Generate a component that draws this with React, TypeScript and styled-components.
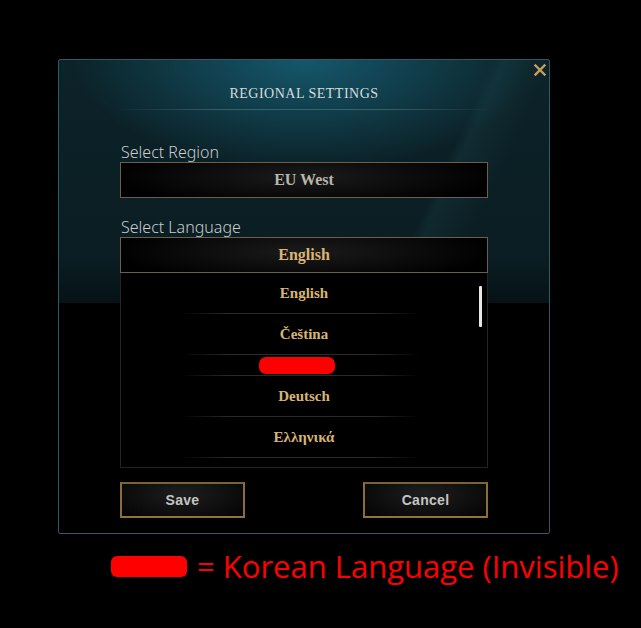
import { createGlobalStyle } from "styled-components"
import styled from "styled-components"

const GlobalStyle = createGlobalStyle`
  html, body {
    margin: 0;
    padding: 0;
    background: #000;
  }
  #root {
    width: 641px;
    height: 628px;
    background: #000;
  }
`

const Page = styled.div`
  padding: 59px 0 0 58px;
  width: 641px;
  height: 628px;
  box-sizing: border-box;
  background: #000;
`

const Dialog = styled.section`
  position: relative;
  width: 492px;
  height: 475px;
  box-sizing: border-box;
  border: 1px solid #2f5963;
  border-radius: 2px;
  background:
    radial-gradient(ellipse 230px 110px at 50% 0%, rgba(24, 105, 130, 0.75), rgba(12, 50, 62, 0) 100%),
    linear-gradient(115deg, rgba(0, 0, 0, 0) 72%, rgba(40, 90, 100, 0.18) 74%, rgba(0, 0, 0, 0) 82%),
    linear-gradient(to bottom, #0c2329 0px, #0a1d22 200px, #061216 242px),
    #000;
  background-size: 100% 100%, 100% 243px, 100% 243px, auto;
  background-repeat: no-repeat;
  display: flex;
  flex-direction: column;
  align-items: center;
`

const CloseButton = styled.button`
  position: absolute;
  top: 3px;
  right: 2px;
  width: 14px;
  height: 14px;
  padding: 0;
  border: 0;
  background: none;
  cursor: pointer;
`

const Title = styled.h1`
  margin: 25px 0 0;
  font-family: "Liberation Serif", "DejaVu Serif", serif;
  font-weight: 400;
  font-size: 14px;
  letter-spacing: 0.5px;
  color: #d6dcdc;
  line-height: 18px;
`

const Divider = styled.div`
  width: 380px;
  height: 1px;
  margin-top: 6px;
  background: linear-gradient(to right, rgba(60, 110, 120, 0), rgba(60, 110, 120, 0.8) 30%, rgba(60, 110, 120, 0.8) 70%, rgba(60, 110, 120, 0));
`

const Body = styled.div`
  width: 368px;
  margin-top: 32px;
  display: flex;
  flex-direction: column;
`

const Label = styled.div<{ $top?: number }>`
  margin-top: ${(p) => p.$top ?? 0}px;
  font-family: "Noto Sans", "Open Sans", sans-serif;
  font-weight: 300;
  font-size: 16px;
  line-height: 20px;
  color: #c9cccc;
  padding-left: 1px;
`

const Select = styled.div<{ $active?: boolean }>`
  height: 36px;
  box-sizing: border-box;
  border: 1px solid #6e6048;
  background: radial-gradient(ellipse 70% 120% at 50% 40%, #1b1b1b, #000 75%);
  display: flex;
  align-items: center;
  justify-content: center;
  font-family: "Liberation Serif", "DejaVu Serif", serif;
  font-weight: 700;
  font-size: 16px;
  color: ${(p) => (p.$active ? "#dcb574" : "#b9b6aa")};
`

const List = styled.ul`
  position: relative;
  margin: 0;
  padding: 0;
  list-style: none;
  height: 195px;
  box-sizing: border-box;
  border: 1px solid #262320;
  border-top: 0;
  background: #000;
  overflow: hidden;
`

const Item = styled.li<{ $short?: boolean }>`
  position: relative;
  height: ${(p) => (p.$short ? 21 : 41)}px;
  display: flex;
  align-items: center;
  justify-content: center;
  font-family: "Liberation Serif", "DejaVu Serif", serif;
  font-weight: 700;
  font-size: 15px;
  color: #d7b475;
  padding-bottom: 1px;
  box-sizing: border-box;

  &::after {
    content: "";
    position: absolute;
    left: 60px;
    right: 66px;
    bottom: 0;
    height: 1px;
    background: linear-gradient(to right, rgba(40, 40, 40, 0), #2a2a2a 20%, #2a2a2a 80%, rgba(40, 40, 40, 0));
  }
`

const Hidden = styled.span`
  display: block;
  width: 76px;
  height: 17px;
  margin-left: -14px;
  border-radius: 7px;
  background: #ff0000;
`

const Scrollbar = styled.div`
  position: absolute;
  top: 13px;
  right: 5px;
  width: 3px;
  height: 41px;
  background: #e6e6e6;
  border-radius: 1px;
`

const Actions = styled.div`
  margin-top: 14px;
  display: flex;
  justify-content: space-between;
`

const Button = styled.button`
  width: 125px;
  height: 36px;
  box-sizing: border-box;
  border: 2px solid #8a6c3e;
  border-top-color: #7d6238;
  border-bottom-color: #94733f;
  background: radial-gradient(ellipse 80% 120% at 50% 30%, #1e1e1e, #050505 80%);
  font-family: "Liberation Sans", Arial, sans-serif;
  font-weight: 700;
  font-size: 14px;
  color: #c4c4c4;
  padding: 0;
  letter-spacing: 0.3px;
`

const Note = styled.div`
  margin: 15px 0 0 53px;
  display: flex;
  align-items: center;
  gap: 10px;
`

const NotePill = styled.span`
  width: 76px;
  height: 21px;
  border-radius: 6px;
  background: #ff0000;
`

const NoteText = styled.span`
  font-family: "Liberation Sans Narrow", "Open Sans", sans-serif;
  font-size: 31px;
  line-height: 34px;
  color: #ff0000;
`

const languages = ["English", "Čeština", "", "Deutsch", "Ελληνικά"]

export default function App() {
  return (
    <Page>
      <GlobalStyle />
      <Dialog>
        <CloseButton aria-label="Close">
          <svg width="14" height="14" viewBox="0 0 14 14">
            <path d="M2.5 2.5 L11.5 11.5 M11.5 2.5 L2.5 11.5" stroke="#c99d5c" strokeWidth="2.4" strokeLinecap="square" />
          </svg>
        </CloseButton>
        <Title>REGIONAL SETTINGS</Title>
        <Divider />
        <Body>
          <Label>Select Region</Label>
          <Select>EU West</Select>
          <Label $top={19}>Select Language</Label>
          <Select $active>English</Select>
          <List>
            {languages.map((lang, i) =>
              lang ? (
                <Item key={i}>{lang}</Item>
              ) : (
                <Item key={i} $short>
                  <Hidden />
                </Item>
              ),
            )}
            <Scrollbar />
          </List>
          <Actions>
            <Button>Save</Button>
            <Button>Cancel</Button>
          </Actions>
        </Body>
      </Dialog>
      <Note>
        <NotePill />
        <NoteText>= Korean Language (Invisible)</NoteText>
      </Note>
    </Page>
  )
}
